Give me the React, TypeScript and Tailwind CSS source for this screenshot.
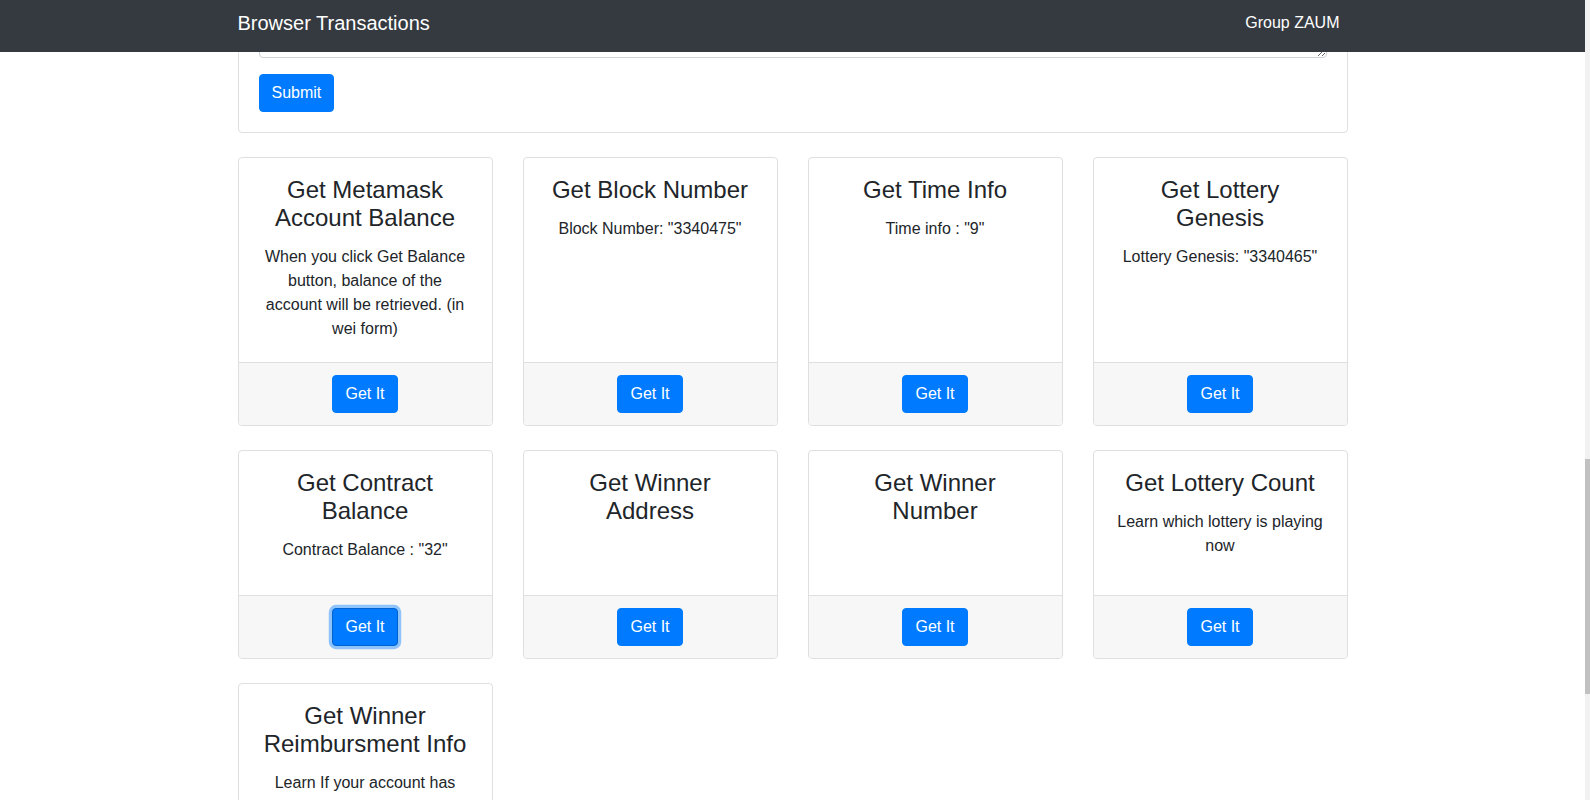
import { useLayoutEffect, useRef } from "react";

type Info = { title: string; text?: string; focused?: boolean };

const cards: Info[] = [
  {
    title: "Get Metamask Account Balance",
    text: "When you click Get Balance button, balance of the account will be retrieved. (in wei form)",
  },
  { title: "Get Block Number", text: 'Block Number: "3340475"' },
  { title: "Get Time Info", text: 'Time info : "9"' },
  { title: "Get Lottery Genesis", text: 'Lottery Genesis: "3340465"' },
  { title: "Get Contract Balance", text: 'Contract Balance : "32"', focused: true },
  { title: "Get Winner Address" },
  { title: "Get Winner Number" },
  { title: "Get Lottery Count", text: "Learn which lottery is playing now" },
  {
    title: "Get Winner Reimbursment Info",
    text: "Learn If your account has reimbursment waiting from previous lotteries",
  },
];

function InfoCard({ title, text, focused }: Info) {
  return (
    <div className="flex flex-col rounded border border-[#dfdfdf] bg-white">
      <div className="min-h-[144px] flex-1 px-5 pt-[18px] pb-[21px] text-center">
        <h4 className="mb-[13px] text-2xl leading-[28px] font-normal">{title}</h4>
        {text && <p className="text-base leading-6">{text}</p>}
      </div>
      <div className="rounded-b border-t border-[#dfdfdf] bg-[#f7f7f7] px-5 py-3 text-center">
        <button
          className={
            focused
              ? "rounded border border-[#0062cc] bg-[#007bff] px-3 py-1.5 text-base leading-6 text-white shadow-[0_0_0_3.2px_rgba(38,143,255,0.5)]"
              : "rounded border border-[#007bff] bg-[#007bff] px-3 py-1.5 text-base leading-6 text-white"
          }
        >
          Get It
        </button>
      </div>
    </div>
  );
}

export default function App() {
  const scrollRef = useRef<HTMLDivElement>(null);
  const submitRef = useRef<HTMLButtonElement>(null);

  // page is shown scrolled down so that the Submit button sits near the navbar
  useLayoutEffect(() => {
    const c = scrollRef.current;
    const s = submitRef.current;
    if (!c || !s) return;
    c.scrollTop = s.getBoundingClientRect().top - c.getBoundingClientRect().top - 74;
  }, []);

  return (
    <div className="flex h-screen w-full overflow-hidden bg-white font-['Liberation_Sans',Arial,sans-serif] text-[#212529]">
      <div className="relative h-full flex-1">
        <nav className="absolute top-0 right-0 left-0 z-10 h-[52px] bg-[#343a40]">
          <div className="mx-auto flex h-full max-w-[1140px] items-center justify-between px-[15px] pb-[6px]">
            <span className="text-xl leading-[30px] text-white">Browser Transactions</span>
            <span className="pr-2 text-base leading-6 text-white">Group ZAUM</span>
          </div>
        </nav>

        <div ref={scrollRef} className="h-full overflow-hidden">
          <div className="mx-auto max-w-[1140px] px-[15px] pt-[80px] pb-12">
            <h2 className="mb-6 text-center text-[32px] leading-[38px]">Lottery Transactions</h2>
            <div className="mb-[25px] rounded border border-[#dfdfdf] p-5">
              <h4 className="mb-3 text-2xl leading-[28px]">Buy Ticket</h4>
              <label className="mb-2 block text-base">Hash of your number</label>
              <input className="mb-4 block w-full rounded border border-[#ced4da] px-3 py-1.5 text-base leading-6" />
              <button className="rounded border border-[#007bff] bg-[#007bff] px-3 py-1.5 text-base leading-6 text-white">
                Buy
              </button>
            </div>
            <div className="rounded border border-[#dfdfdf] p-5">
              <h4 className="mb-3 text-2xl leading-[28px]">Reveal Number</h4>
              <label className="mb-2 block text-base">Your number and random string</label>
              <textarea
                rows={3}
                className="block w-full rounded border border-[#ced4da] px-3 py-1.5 text-base leading-6"
              />
              <button
                ref={submitRef}
                className="mt-4 rounded border border-[#007bff] bg-[#007bff] px-3 py-1.5 text-base leading-6 text-white"
              >
                Submit
              </button>
            </div>

            <div className="mt-6 grid grid-cols-4 gap-x-[30px] gap-y-6">
              {cards.map((c) => (
                <InfoCard key={c.title} {...c} />
              ))}
            </div>
          </div>
        </div>
      </div>

      <div className="relative h-full w-[5px] bg-[#f1f1f1]">
        <div className="absolute top-[459px] h-[235px] w-full bg-[#c1c1c1]" />
      </div>
    </div>
  );
}
